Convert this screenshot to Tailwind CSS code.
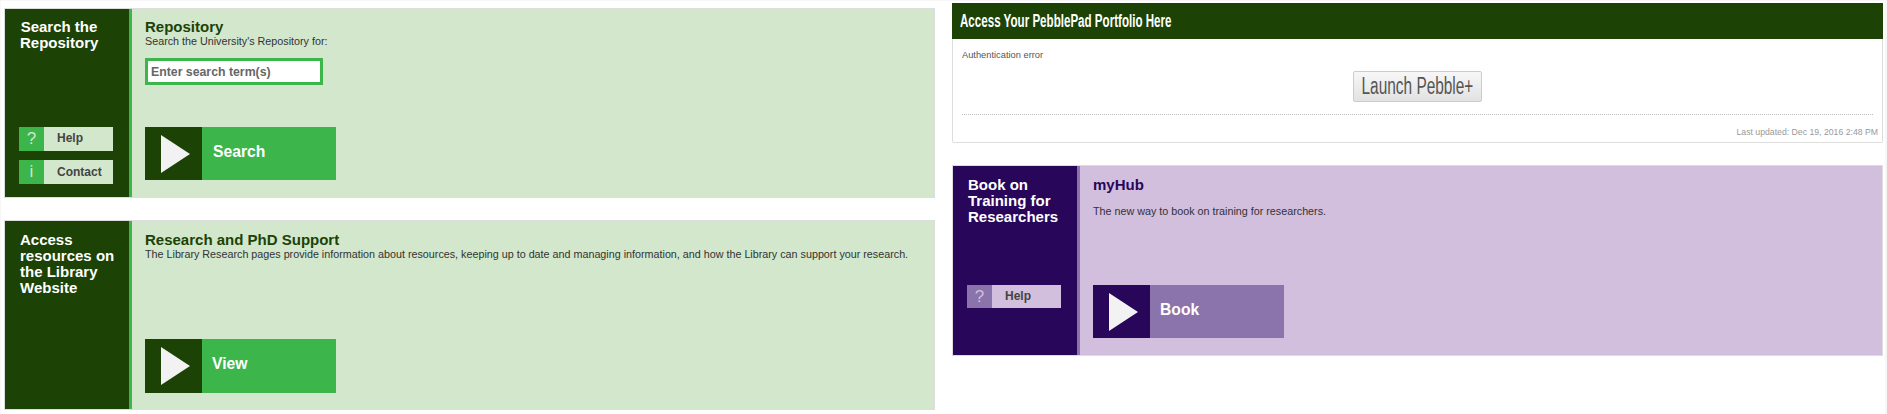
<!DOCTYPE html>
<html lang="en">
<head>
    <meta charset="UTF-8">
    <meta name="viewport" content="width=device-width, initial-scale=1.0">
    <title>Researcher Tools</title>
    <script src="https://cdn.jsdelivr.net/npm/@tailwindcss/browser@4"></script>
</head>
<body class="bg-white font-['Liberation_Sans',Arial,sans-serif] text-[10.75px] text-[#333]">
    <div class="flex w-[1887px] h-[414px] overflow-hidden pl-[3px] border-l border-t border-r-2 border-[#f7f7f7]">

        <!-- Left column -->
        <div class="w-[931px] pt-[7px] flex flex-col gap-[22px]">

            <!-- Repository -->
            <section class="flex h-[190px] border border-[#ddd] bg-[#d2e7cb]">
                <div class="w-[127px] shrink-0 border-r-[3px] border-[#3cb54a] bg-[#1c4305] flex flex-col pl-[14px] pt-[10px] pb-[13px]">
                    <h2 class="w-[78px] text-center text-[15px] leading-[16px] font-bold text-white ml-[1px]">Search the<br>Repository</h2>
                    <div class="mt-auto flex flex-col gap-[9px]">
                        <a class="flex w-[94px] h-[24px] bg-[#d2e7cb] text-[12px] font-bold text-[#444] leading-[22px]">
                            <span class="w-[25px] bg-[#3cb54a] text-[#d2e7cb] text-center text-[17px] leading-[24px] font-normal">?</span>
                            <span class="pl-[13px]">Help</span>
                        </a>
                        <a class="flex w-[94px] h-[24px] bg-[#d2e7cb] text-[12px] font-bold text-[#444] leading-[24px]">
                            <span class="w-[25px] bg-[#3cb54a] text-[#d2e7cb] text-center text-[17px] leading-[24px] font-normal">i</span>
                            <span class="pl-[13px]">Contact</span>
                        </a>
                    </div>
                </div>
                <div class="flex-1 flex flex-col pl-[13px] pt-[10px] pb-[17px]">
                    <h3 class="text-[15px] leading-[16px] font-bold text-[#1c4305]">Repository</h3>
                    <p class="leading-[13px]">Search the University's Repository for:</p>
                    <input class="mt-[10px] w-[178px] h-[27px] border-[3px] border-[#3cb54a] bg-white pl-[3px] text-[12.3px] font-bold text-[#666] placeholder-[#666] outline-none" placeholder="Enter search term(s)">
                    <a class="mt-auto flex w-[191px] h-[53px] bg-[#3cb54a]">
                        <span class="w-[57px] bg-[#1c4305] flex items-center pl-[16px]">
                            <svg width="29" height="38" viewBox="0 0 29 38"><polygon points="0,0 29,19 0,38" fill="#f2f2f2"/></svg>
                        </span>
                        <span class="pl-[11px] text-[15.7px] leading-[50px] font-bold text-white">Search</span>
                    </a>
                </div>
            </section>

            <!-- Research and PhD Support -->
            <section class="flex h-[190px] border border-[#ddd] bg-[#d2e7cb]">
                <div class="w-[127px] shrink-0 border-r-[3px] border-[#3cb54a] bg-[#1c4305] pl-[15px] pt-[11px]">
                    <h2 class="text-[15px] leading-[16px] font-bold text-white">Access resources on the Library Website</h2>
                </div>
                <div class="flex-1 flex flex-col pl-[13px] pt-[11px] pb-[16px]">
                    <h3 class="text-[15px] leading-[16px] font-bold text-[#1c4305]">Research and PhD Support</h3>
                    <p class="leading-[13px]">The Library Research pages provide information about resources, keeping up to date and managing information, and how the Library can support your research.</p>
                    <a class="mt-auto flex w-[191px] h-[54px] bg-[#3cb54a]">
                        <span class="w-[57px] bg-[#1c4305] flex items-center pl-[16px]">
                            <svg width="29" height="38" viewBox="0 0 29 38"><polygon points="0,0 29,19 0,38" fill="#f2f2f2"/></svg>
                        </span>
                        <span class="pl-[10px] text-[15.7px] leading-[50px] font-bold text-white">View</span>
                    </a>
                </div>
            </section>
        </div>

        <!-- Right column -->
        <div class="w-[931px] ml-[17px] pt-[2px] flex flex-col gap-[22px]">

            <!-- PebblePad -->
            <section class="h-[140px] flex flex-col border border-t-0 border-[#ddd] rounded-b-[2px]">
                <h2 class="-mx-px h-[36px] bg-[#1c4305] pl-[8px] text-[18px] leading-[36px] font-bold text-white">
                    <span class="inline-block origin-left scale-x-[0.644] whitespace-nowrap">Access Your PebblePad Portfolio Here</span>
                </h2>
                <div class="flex-1 flex flex-col px-[9px]">
                    <p class="mt-[10px] text-[9.3px] leading-[12px] text-[#555]">Authentication error</p>
                    <div class="mt-[10px] flex justify-center">
                        <button class="flex items-center justify-center w-[129px] h-[31px] border border-[#ccc] rounded-[2px] bg-linear-to-b from-[#f7f7f7] to-[#e2e2e2] text-[23px] text-[#555]">
                            <span class="inline-block scale-x-[0.67] whitespace-nowrap">Launch Pebble+</span>
                        </button>
                    </div>
                    <div class="mt-[12px] border-t border-dotted border-[#bbb]"></div>
                    <p class="mt-[11px] -mr-[5px] text-right text-[8.7px] leading-[12px] text-[#999]">Last updated: Dec 19, 2016 2:48 PM</p>
                </div>
            </section>

            <!-- myHub -->
            <section class="flex h-[191px] border border-[#ddd] bg-[#d2bedd]">
                <div class="w-[127px] shrink-0 border-r-[3px] border-[#8b74ab] bg-[#280659] flex flex-col pl-[14px] pt-[11px]">
                    <h2 class="pl-[1px] text-[15px] leading-[16px] font-bold text-white">Book on Training for Researchers</h2>
                    <a class="mt-[60px] flex w-[94px] h-[23px] bg-[#d2bedd] text-[12px] font-bold text-[#444] leading-[22px]">
                        <span class="w-[25px] bg-[#8b74ab] text-[#d2bedd] text-center text-[17px] leading-[23px] font-normal">?</span>
                        <span class="pl-[13px]">Help</span>
                    </a>
                </div>
                <div class="flex-1 flex flex-col pl-[13px] pt-[11px] pb-[17px]">
                    <h3 class="text-[15px] leading-[16px] font-bold text-[#280659]">myHub</h3>
                    <p class="mt-[11px] leading-[14px]">The new way to book on training for researchers.</p>
                    <a class="mt-auto flex w-[191px] h-[53px] bg-[#8b74ab]">
                        <span class="w-[57px] bg-[#280659] flex items-center pl-[16px]">
                            <svg width="29" height="38" viewBox="0 0 29 38"><polygon points="0,0 29,19 0,38" fill="#f2f2f2"/></svg>
                        </span>
                        <span class="pl-[10px] text-[15.7px] leading-[50px] font-bold text-white">Book</span>
                    </a>
                </div>
            </section>
        </div>
    </div>
</body>
</html>
